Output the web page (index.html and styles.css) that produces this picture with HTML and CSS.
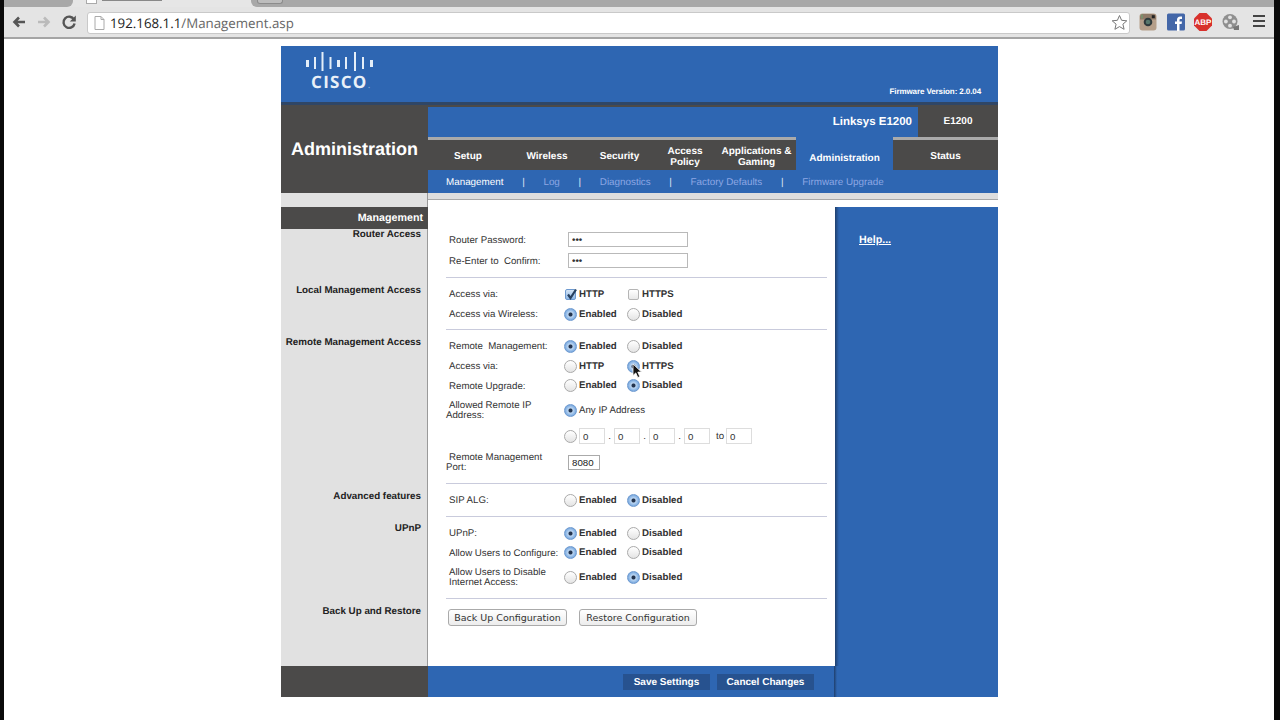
FILE: index.html
```html
<!DOCTYPE html>
<html lang="en">

<head>
    <meta charset="UTF-8">
    <title>Management</title>
    <link rel="stylesheet" href="styles.css">
</head>

<body>
    <div class="window">
        <div class="tabstrip">
            <div class="strip-left"></div>
            <div class="strip-tab"><div class="strip-favicon"></div><div class="strip-title"></div></div>
            <div class="strip-right"><div class="new-tab"></div></div>
        </div>

        <div class="toolbar">
            <svg class="tool-btn" width="16" height="16" viewBox="0 0 16 16"><path d="M14 8H4M8 3.5 3.5 8 8 12.5" fill="none" stroke="#555" stroke-width="2.6"/></svg>
            <svg class="tool-btn" width="16" height="16" viewBox="0 0 16 16"><path d="M2 8h10M8 3.5 12.500 8 8 12.5" fill="none" stroke="#bbb" stroke-width="2.6"/></svg>
            <svg class="tool-btn" width="16" height="16" viewBox="0 0 16 16"><path d="M13 5.500A5.600 5.600 0 1 0 13.600 9.500" fill="none" stroke="#555" stroke-width="2.400"/><path d="M14.800 1.500v6h-6z" fill="#555"/></svg>
            <div class="omnibox">
                <svg width="11" height="14" viewBox="0 0 11 14"><path d="M1 .5h6l3 3v10H1zM7 .5v3h3" fill="#fff" stroke="#aaa"/></svg>
                <span class="url"><b>192.168.1.1</b>/Management.asp</span>
                <svg class="star" width="17" height="17" viewBox="0 0 17 17"><path d="m8.500 1.500 2.100 4.800 5.200.5-3.900 3.400 1.200 5.100-4.600-2.700-4.600 2.700 1.200-5.100L1.200 6.800l5.200-.5z" fill="#fff" stroke="#777"/></svg>
            </div>
            <svg class="ext" width="18" height="18" viewBox="0 0 18 18"><rect x=".5" y=".5" width="17" height="17" rx="3" fill="#b59f8a"/><path d="M1 6.500V3.500A3 3 0 0 1 3.500 1h11A3 3 0 0 1 17 3.500v3z" fill="#8f7a68"/><circle cx="9" cy="9" r="4.300" fill="#2f3a3c"/><circle cx="9" cy="9" r="2.300" fill="#56776c"/><rect x="12.800" y="2.200" width="3" height="3" fill="#222"/><path d="M3 1.500v4" stroke="#6d9f70" stroke-width="1.200"/></svg>
            <svg class="ext" width="18" height="18" viewBox="0 0 18 18"><rect y=".5" width="18" height="17" rx="1.500" fill="#4467a8"/><path d="M10 18v-7H8V8.500h2V6.800C10 4.800 11.200 3.500 13.300 3.500h1.700V6h-1.300c-.9 0-1.200.4-1.200 1.100v1.400H15l-.4 2.500h-2.100v7z" fill="#fff"/></svg>
            <svg class="ext" width="18" height="18" viewBox="0 0 18 18"><path d="M5.500 0h7L18 5.500v7L12.500 18h-7L0 12.500v-7z" fill="#d8312c"/><text class="abp-text" x="9" y="12" text-anchor="middle">ABP</text></svg>
            <svg class="ext" width="18" height="18" viewBox="0 0 18 18"><circle cx="8" cy="8.500" r="7.500" fill="#8f8f8f"/><circle cx="8" cy="4.300" r="1.900" fill="#e2e2e2"/><circle cx="8" cy="12.700" r="1.900" fill="#e2e2e2"/><circle cx="3.900" cy="8.500" r="1.900" fill="#e2e2e2"/><circle cx="12" cy="8.500" r="1.900" fill="#e2e2e2"/><path d="M11 14l6-2v5h-5z" fill="#777"/></svg>
            <div class="menu-btn"><span></span><span></span><span></span></div>
        </div>

        <div class="frame">
            <div class="masthead">
                <svg class="logo-bars" width="68" height="20" viewBox="0 0 68 20">
                    <g fill="#e4eef8">
                        <rect x="0" y="8" width="3" height="7"/>
                        <rect x="8" y="5" width="2" height="12"/>
                        <rect x="15.500" y="0" width="2" height="19"/>
                        <rect x="23.500" y="5" width="2" height="12"/>
                        <rect x="31" y="8" width="3" height="7"/>
                        <rect x="39" y="5" width="2" height="12"/>
                        <rect x="48" y="0" width="2" height="19"/>
                        <rect x="56" y="5" width="2" height="12"/>
                        <rect x="64" y="8" width="3" height="7"/>
                    </g>
                </svg>
                <div class="logo-word">CISCO<span class="logo-dot">.</span></div>
                <div class="firmware">Firmware Version: 2.0.04</div>
            </div>

            <div class="title-row">
                <h1 class="page-title">Administration</h1>
                <div class="nav-col">
                    <div class="model-row">
                        <div class="model-name">Linksys E1200</div>
                        <div class="model-id">E1200</div>
                    </div>
                    <div class="tabs">
                        <div class="tab tab-setup">Setup</div>
                        <div class="tab tab-wireless">Wireless</div>
                        <div class="tab tab-security">Security</div>
                        <div class="tab tab-access">Access<br>Policy</div>
                        <div class="tab tab-apps">Applications &amp;<br>Gaming</div>
                        <div class="tab tab-active">Administration</div>
                        <div class="tab tab-status">Status</div>
                    </div>
                    <div class="subnav">
                        <span class="sub-current">Management</span><span class="sub-sep">|</span>
                        <span>Log</span><span class="sub-sep">|</span>
                        <span>Diagnostics</span><span class="sub-sep">|</span>
                        <span>Factory Defaults</span><span class="sub-sep">|</span>
                        <span>Firmware Upgrade</span>
                    </div>
                </div>
            </div>

            <div class="main">
                <div class="sidebar">
                    <div class="side-band">Management</div>
                    <div class="side-item side-router">Router Access</div>
                    <div class="side-item side-local">Local Management Access</div>
                    <div class="side-item side-remote">Remote Management Access</div>
                    <div class="side-item side-advanced">Advanced features</div>
                    <div class="side-item side-upnp">UPnP</div>
                    <div class="side-item">Back Up and Restore</div>
                </div>

                <div class="content">
                    <div class="content-rule"></div>
                    <div class="content-body">
                        <div class="form">
                            <div class="row row-pw"><div class="lbl">Router Password:</div><input class="pw-input" type="text" value="•••"></div>
                            <div class="row row-pw"><div class="lbl">Re-Enter to&nbsp; Confirm:</div><input class="pw-input" type="text" value="•••"></div>
                            <div class="rule"></div>

                            <div class="row">
                                <div class="lbl">Access via:</div>
                                <label class="opt"><span class="check check-on"><svg width="13" height="13" viewBox="0 0 13 13"><path d="M3 6.500 5.500 10 11 1.500" fill="none" stroke="#27405f" stroke-width="2.200"/></svg></span>HTTP</label>
                                <label class="opt"><span class="check"></span>HTTPS</label>
                            </div>
                            <div class="row">
                                <div class="lbl">Access via Wireless:</div>
                                <label class="opt"><span class="radio radio-on"></span>Enabled</label>
                                <label class="opt"><span class="radio"></span>Disabled</label>
                            </div>
                            <div class="rule rule-tight"></div>

                            <div class="row">
                                <div class="lbl">Remote&nbsp; Management:</div>
                                <label class="opt"><span class="radio radio-on"></span>Enabled</label>
                                <label class="opt"><span class="radio"></span>Disabled</label>
                            </div>
                            <div class="row">
                                <div class="lbl">Access via:</div>
                                <label class="opt"><span class="radio"></span>HTTP</label>
                                <label class="opt"><span class="radio radio-on">
                                    <svg class="cursor" width="11" height="16" viewBox="0 0 11 16"><path d="M1 1v11.500l2.800-2.600 2 4.600 2-.9-2-4.500h3.700z" fill="#111" stroke="#fff" stroke-width=".8"/></svg>
                                </span>HTTPS</label>
                            </div>
                            <div class="row row-short">
                                <div class="lbl">Remote Upgrade:</div>
                                <label class="opt"><span class="radio"></span>Enabled</label>
                                <label class="opt"><span class="radio radio-on"></span>Disabled</label>
                            </div>
                            <div class="row row-ip-any">
                                <div class="lbl lbl-hang">Allowed Remote IP<br>Address:</div>
                                <label class="opt opt-wide"><span class="radio radio-on"></span>Any IP Address</label>
                            </div>
                            <div class="row row-ip">
                                <div class="lbl"></div>
                                <span class="radio"></span>
                                <input class="ip-input" type="text" value="0"><span class="ip-dot">.</span>
                                <input class="ip-input" type="text" value="0"><span class="ip-dot">.</span>
                                <input class="ip-input" type="text" value="0"><span class="ip-dot">.</span>
                                <input class="ip-input" type="text" value="0">
                                <span class="ip-to">to</span>
                                <input class="ip-input" type="text" value="0">
                            </div>
                            <div class="row row-port">
                                <div class="lbl lbl-hang">Remote Management<br>Port:</div>
                                <input class="port-input" type="text" value="8080">
                            </div>
                            <div class="rule rule-port"></div>

                            <div class="row">
                                <div class="lbl">SIP ALG:</div>
                                <label class="opt"><span class="radio"></span>Enabled</label>
                                <label class="opt"><span class="radio radio-on"></span>Disabled</label>
                            </div>
                            <div class="rule"></div>

                            <div class="row">
                                <div class="lbl">UPnP:</div>
                                <label class="opt"><span class="radio radio-on"></span>Enabled</label>
                                <label class="opt"><span class="radio"></span>Disabled</label>
                            </div>
                            <div class="row row-short">
                                <div class="lbl">Allow Users to Configure:</div>
                                <label class="opt"><span class="radio radio-on"></span>Enabled</label>
                                <label class="opt"><span class="radio"></span>Disabled</label>
                            </div>
                            <div class="row row-tall">
                                <div class="lbl">Allow Users to Disable<br>Internet Access:</div>
                                <label class="opt"><span class="radio"></span>Enabled</label>
                                <label class="opt"><span class="radio radio-on"></span>Disabled</label>
                            </div>
                            <div class="rule"></div>

                            <div class="backup-row">
                                <button class="cfg-btn cfg-backup">Back Up Configuration</button>
                                <button class="cfg-btn cfg-restore">Restore Configuration</button>
                            </div>
                        </div>

                        <div class="help-panel"><a class="help-link">Help...</a></div>
                    </div>
                </div>
            </div>

            <div class="footer">
                <div class="footer-left"></div>
                <div class="footer-right">
                    <div class="save-btn">Save Settings</div>
                    <div class="save-btn cancel-btn">Cancel Changes</div>
                </div>
            </div>
        </div>
    </div>
</body>

</html>
```

FILE: styles.css
```css
body {
    margin: 0;
    padding: 0;
    background-color: #fff;
    font-family: 'Liberation Sans', Arial, sans-serif;
    text-rendering: geometricPrecision;
    overflow: hidden;
}

.window {
    box-sizing: border-box;
    height: 720px;
    border-left: 4px solid #0a0a0a;
    border-right: 6px solid #0a0a0a;
    overflow: hidden;
}

/* browser chrome */
.tabstrip {
    display: flex;
    height: 7px;
    background-color: #e6e6e6;
    overflow: hidden;
}

.strip-left {
    width: 69px;
    background-color: #a8a8a8;
    border-bottom-right-radius: 6px;
}

.strip-tab {
    display: flex;
    gap: 5px;
    align-items: flex-start;
    width: 178px;
    padding-left: 13px;
    box-sizing: border-box;
}

.strip-favicon {
    width: 9px;
    height: 3px;
    background-color: #fff;
    border: 1px solid #aaa;
    border-top: none;
}

.strip-title {
    width: 60px;
    height: 1px;
    background-color: #888;
}

.strip-right {
    flex: 1;
    background-color: #a8a8a8;
    border-bottom-left-radius: 6px;
}

.new-tab {
    width: 24px;
    height: 3px;
    margin-left: 6px;
    background-color: #bdbdbd;
    border: 1px solid #8c8c8c;
    border-top: none;
    border-radius: 0 0 3px 3px;
}

.toolbar {
    display: flex;
    align-items: center;
    height: 30px;
    padding-left: 7px;
    background-color: #e4e4e4;
    border-bottom: 2px solid #a5a5a5;
}

.tool-btn {
    margin-right: 9px;
}

.omnibox {
    display: flex;
    align-items: center;
    width: 1043px;
    height: 22px;
    margin: 1px 9px 0 1px;
    padding-left: 6px;
    box-sizing: border-box;
    background-color: #fff;
    border: 1px solid #c9c9c9;
    border-radius: 3px;
}

.url {
    margin-left: 5px;
    padding-top: 1px;
    font-family: 'Open Sans', sans-serif;
    font-size: 13.300px;
    color: #666;
}

.url b {
    font-weight: normal;
    color: #222;
}

.star {
    margin-left: auto;
    margin-right: 1px;
}

.ext {
    margin-right: 9.500px;
}

.abp-text {
    font-size: 8px;
    font-weight: bold;
    fill: #fff;
}

.menu-btn {
    width: 12px;
    margin-left: 4px;
}

.menu-btn span {
    display: block;
    height: 2px;
    margin-bottom: 3px;
    background-color: #444;
}

/* router page */
.frame {
    width: 717px;
    margin: 7px 0 0 277px;
}

.masthead {
    position: relative;
    height: 56px;
    background-color: #2e66b2;
    border-bottom: 3px solid #2f4666;
    color: #fff;
}

.logo-bars {
    display: block;
    margin-left: 25px;
    padding-top: 6px;
}

.logo-word {
    margin: 3px 0 0 30px;
    font-family: 'Open Sans', sans-serif;
    font-size: 17px;
    line-height: 14px;
    font-weight: 700;
    letter-spacing: 1.300px;
    color: #e9f0f8;
}

.logo-dot {
    color: #7fa6d6;
    font-weight: normal;
    font-size: 10px;
    letter-spacing: 0;
}

.firmware {
    position: absolute;
    right: 17px;
    bottom: 6px;
    font-size: 8px;
    font-weight: bold;
    letter-spacing: -0.100px;
}

.title-row {
    display: flex;
    height: 88px;
}

.page-title {
    width: 147px;
    margin: 0;
    padding-left: 10px;
    box-sizing: border-box;
    background-color: #4b4a49;
    color: #fff;
    font-size: 18px;
    line-height: 88px;
}

.nav-col {
    flex: 1;
}

.model-row {
    display: flex;
    height: 30px;
    border-top: 2px solid #4b4a49;
    background-color: #2e66b2;
    color: #fff;
    font-weight: bold;
}

.model-name {
    flex: 1;
    padding-right: 6px;
    text-align: right;
    font-size: 11.500px;
    line-height: 30px;
}

.model-id {
    width: 80px;
    margin-top: -2px;
    background-color: #4b4a49;
    text-align: center;
    font-size: 10px;
    line-height: 34px;
}

.tabs {
    display: flex;
    height: 33px;
}

.tab {
    display: flex;
    align-items: center;
    justify-content: center;
    box-sizing: border-box;
    padding-top: 4px;
    background-color: #4b4a49;
    border-top: 3px solid #aaa;
    color: #fff;
    font-size: 10px;
    line-height: 11.500px;
    font-weight: bold;
    text-align: center;
}

.tab-setup { width: 80px; }
.tab-wireless { width: 78px; }
.tab-security { width: 67px; }
.tab-access { width: 64px; }
.tab-apps { width: 79px; }
.tab-status { width: 105px; }

.tab-active {
    width: 97px;
    padding-top: 7px;
    background-color: #2e66b2;
    border-top-color: #2e66b2;
}

.subnav {
    display: flex;
    align-items: center;
    gap: 18.700px;
    box-sizing: border-box;
    height: 23px;
    padding: 2px 0 0 18px;
    background-color: #2e66b2;
    color: #8da7e4;
    font-size: 9.850px;
}

.sub-current {
    color: #fff;
}

.sub-sep {
    color: #e0e8f4;
}

.main {
    display: flex;
    height: 473px;
}

.sidebar {
    box-sizing: border-box;
    width: 147px;
    padding-top: 14px;
    background-color: #e1e1e1;
    border-right: 1px solid #9a9a9a;
}

.side-band {
    height: 22px;
    margin: 0 -1px 1px 0;
    padding-right: 5px;
    background-color: #4b4a49;
    color: #fff;
    text-align: right;
    font-size: 10.700px;
    line-height: 22px;
    font-weight: bold;
}

.side-item {
    padding-right: 6px;
    color: #222;
    text-align: right;
    font-size: 9.800px;
    line-height: 10px;
    font-weight: bold;
}

.side-router { height: 56px; }
.side-local { height: 52px; }
.side-remote { height: 154px; }
.side-advanced { height: 32px; }
.side-upnp { height: 83px; }

.content {
    flex: 1;
}

.content-rule {
    height: 7px;
    background-color: #dedede;
    border-bottom: 1px solid #a8a8a8;
    box-sizing: border-box;
}

.content-body {
    display: flex;
    height: 466px;
}

.form {
    width: 407px;
    box-sizing: border-box;
    padding: 29px 8px 0 18px;
    background-color: #fff;
    color: #333;
    font-size: 9.700px;
}

.row {
    display: flex;
    align-items: center;
    height: 20px;
    padding-left: 3px;
}

.row-pw { height: 21px; }
.row-short { height: 19px; }
.row-tall { height: 30px; }
.row-ip-any { height: 30px; }
.row-ip { height: 22px; }

.row-port {
    height: 26px;
    margin-top: 2px;
}

.rule {
    height: 1px;
    margin: 6px 0;
    background-color: #c9cbdc;
}

.rule-tight {
    margin-top: 5px;
}

.rule-port {
    margin-top: 8px;
}

.lbl {
    width: 115px;
    flex-shrink: 0;
    padding-top: 2px;
    line-height: 10px;
}

.lbl-hang {
    margin-left: -3px;
    width: 118px;
    text-indent: 3px;
}

.opt {
    display: flex;
    align-items: center;
    gap: 2px;
    width: 63px;
    font-weight: bold;
}

.opt-wide {
    width: auto;
    font-weight: normal;
}

.radio {
    position: relative;
    display: block;
    flex-shrink: 0;
    box-sizing: border-box;
    width: 13px;
    height: 13px;
    border: 1px solid #aaa;
    border-radius: 50%;
    background: linear-gradient(#fff, #e4e4e4);
}

.radio-on {
    border-color: #6e9ad0;
    background: radial-gradient(circle, #23344f 0, #23344f 1.500px, #bcd6f2 2.500px, #6fa2dc 6px);
}

.check {
    display: block;
    flex-shrink: 0;
    box-sizing: border-box;
    width: 11px;
    height: 11px;
    margin: 0 1px;
    border: 1px solid #b5b5b5;
    border-radius: 2px;
    background: linear-gradient(#fff, #e8e8e8);
}

.check-on {
    border-color: #6e9ad0;
    background: linear-gradient(#d5e5f6, #8fb8e6);
}

.check-on svg {
    display: block;
    margin: -2px 0 0 -1px;
}

.cursor {
    position: absolute;
    left: 4px;
    top: 2px;
}

input {
    box-sizing: border-box;
    margin: 0;
    padding: 0 0 0 3px;
    background-color: #fff;
    font-family: 'Liberation Sans', Arial, sans-serif;
    font-size: 9.700px;
    color: #333;
    outline: none;
}

.pw-input {
    width: 120px;
    height: 15px;
    margin-left: 4px;
    border: 1px solid #b9b9b9;
    font-weight: bold;
}

.ip-input {
    width: 26px;
    height: 16px;
    border: 1px solid #ddd;
}

.row-ip .radio {
    margin-right: 2px;
}

.ip-dot {
    width: 9px;
    text-align: center;
}

.ip-to {
    width: 10px;
    margin-left: 6px;
}

.port-input {
    width: 32px;
    height: 15px;
    margin-left: 4px;
    border: 1px solid #aaa;
    color: #222;
}

.backup-row {
    display: flex;
    gap: 12px;
    margin: 10px 0 0 2px;
}

.cfg-btn {
    box-sizing: border-box;
    height: 17px;
    padding: 0;
    background: linear-gradient(#fff, #ececec);
    border: 1px solid #aaa;
    border-radius: 3px;
    color: #333;
    font-family: 'DejaVu Sans', sans-serif;
    font-size: 9.500px;
}

.cfg-backup { width: 119px; }
.cfg-restore { width: 118px; }

.help-panel {
    flex: 1;
    margin-top: 7px;
    padding: 23px 0 0 24px;
    background: linear-gradient(to right, #1f3f6d, #2e66b2 4px);
}

.help-link {
    color: #fff;
    font-size: 10.700px;
    font-weight: bold;
    text-decoration: underline;
}

.footer {
    display: flex;
    height: 31px;
}

.footer-left {
    width: 147px;
    background-color: #4b4a49;
}

.footer-right {
    display: flex;
    flex: 1;
    gap: 7px;
    align-items: center;
    padding-left: 195px;
    background: linear-gradient(to right, #2e66b2 406px, #1f3f6d 406px, #2e66b2 409px);
}

.save-btn {
    width: 87px;
    height: 16px;
    background-color: #27528f;
    color: #fff;
    text-align: center;
    font-size: 10px;
    line-height: 17px;
    font-weight: bold;
}

.cancel-btn {
    width: 97px;
}
```
